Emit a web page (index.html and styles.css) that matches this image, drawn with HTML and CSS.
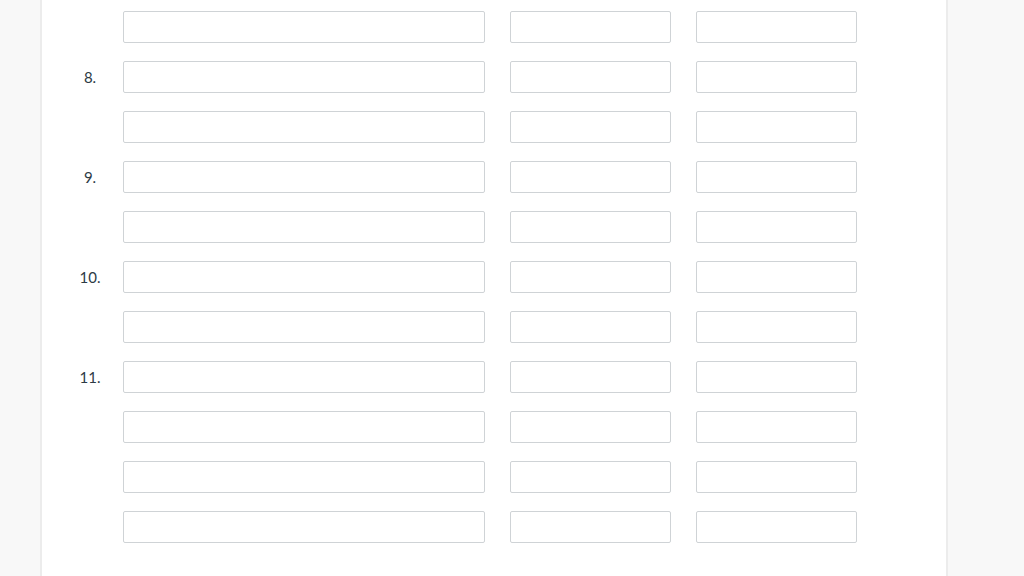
FILE: index.html
```html
<!DOCTYPE html>
<html lang="en">
<head>
<meta charset="utf-8">
<title>Answer table</title>
<link rel="stylesheet" href="styles.css">
</head>
<body>
<main class="panel">
  <div class="rows">
    <div class="row"><span class="num"></span><input class="in wide"><input class="in"><input class="in"></div>
    <div class="row"><span class="num">8.</span><input class="in wide"><input class="in"><input class="in"></div>
    <div class="row"><span class="num"></span><input class="in wide"><input class="in"><input class="in"></div>
    <div class="row"><span class="num">9.</span><input class="in wide"><input class="in"><input class="in"></div>
    <div class="row"><span class="num"></span><input class="in wide"><input class="in"><input class="in"></div>
    <div class="row"><span class="num">10.</span><input class="in wide"><input class="in"><input class="in"></div>
    <div class="row"><span class="num"></span><input class="in wide"><input class="in"><input class="in"></div>
    <div class="row"><span class="num">11.</span><input class="in wide"><input class="in"><input class="in"></div>
    <div class="row"><span class="num"></span><input class="in wide"><input class="in"><input class="in"></div>
    <div class="row"><span class="num"></span><input class="in wide"><input class="in"><input class="in"></div>
    <div class="row"><span class="num"></span><input class="in wide"><input class="in"><input class="in"></div>
  </div>
</main>
</body>
</html>
```

FILE: styles.css
```css
html, body {
  margin: 0;
  padding: 0;
  height: 100%;
}
body {
  background: #f8f8f8;
  font-family: Lato, "Liberation Sans", sans-serif;
  color: #2d3b45;
  overflow: hidden;
}
.panel {
  margin-left: 40px;
  width: 904px;
  min-height: 576px;
  background: #ffffff;
  border-left: 2px solid #ececec;
  border-right: 2px solid #ececec;
  box-sizing: content-box;
}
.rows {
  display: flex;
  flex-direction: column;
  gap: 18px;
  padding: 11px 0 30px 15px;
}
.row {
  display: flex;
  align-items: center;
  gap: 25px;
}
.num {
  width: 66px;
  margin-right: -25px;
  text-align: center;
  font-size: 15px;
  line-height: 20px;
}
.in {
  box-sizing: border-box;
  width: 161px;
  height: 32px;
  margin: 0;
  border: 1px solid #cfd3d6;
  border-radius: 2px;
  background: #fff;
  padding: 0 6px;
  font: inherit;
}
.in.wide {
  width: 362px;
}
```
